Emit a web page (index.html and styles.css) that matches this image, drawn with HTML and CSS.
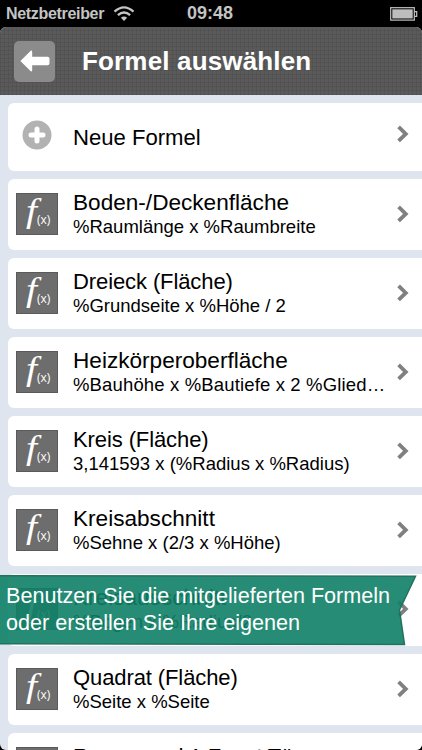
FILE: index.html
```html
<!DOCTYPE html>
<html lang="de">
<head>
  <meta charset="UTF-8" />
  <meta name="viewport" content="width=device-width, initial-scale=1.0" />
  <title>Formel auswählen</title>
  <link rel="stylesheet" href="styles.css">
</head>

<body>
  <svg class="defs" width="0" height="0">
    <symbol id="chevron" viewBox="0 0 12 18">
      <path d="M1.6 1.9 L8.8 8.9 L1.6 15.9" fill="none" stroke="#808080" stroke-width="3.8" />
    </symbol>
  </svg>

  <div class="status-bar">
    <div class="carrier">
      <span class="carrier-name">Netzbetreiber</span>
      <svg class="wifi" width="22" height="16" viewBox="0 0 22 16">
        <path d="M1.5 5.6 Q11 -2.8 20.5 5.6" />
        <path d="M4.9 9.2 Q11 3.8 17.1 9.2" />
        <path class="dot" d="M11 15 L7.9 11.8 Q11 9.2 14.1 11.8 Z" />
      </svg>
    </div>
    <span class="clock">09:48</span>
    <svg class="battery" width="28" height="14" viewBox="0 0 28 14">
      <rect x="0.7" y="0.7" width="23.6" height="12.4" fill="none" stroke="#c4c4c4" stroke-width="1.2" />
      <rect x="2.3" y="2.3" width="20.4" height="9.2" fill="#bdbdbd" />
      <path d="M24.5 4.7 H26.7 V9.3 H24.5" fill="none" stroke="#c4c4c4" stroke-width="1.2" />
    </svg>
  </div>

  <div class="screen">
    <header class="header">
      <button class="back" type="button" aria-label="Zurück">
        <svg width="30" height="22" viewBox="0 0 30 22">
          <path d="M0.4 11 L11 0.6 Q12.2 0.4 12.2 2 V6.8 H27.5 Q29.5 6.8 29.5 8.8 V13.3 Q29.5 15.3 27.5 15.3 H12.2 V20 Q12.2 21.6 11 21.4 Z" fill="#fff" />
        </svg>
      </button>
      <h1>Formel auswählen</h1>
    </header>

    <ul class="list">
      <li class="row row-new">
        <svg class="plus" width="30" height="30" viewBox="0 0 30 30">
          <circle cx="15" cy="15" r="14.5" fill="#b2b2b2" />
          <path d="M15 9 V21 M9 15 H21" stroke="#fff" stroke-width="5" stroke-linecap="round" />
        </svg>
        <div class="text"><div class="name">Neue Formel</div></div>
        <svg class="chevron"><use href="#chevron" /></svg>
      </li>
      <li class="row">
        <div class="icon"><span class="f">f</span><span class="x">(x)</span></div>
        <div class="text"><div class="name">Boden-/Deckenfläche</div><div class="formula">%Raumlänge x %Raumbreite</div></div>
        <svg class="chevron"><use href="#chevron" /></svg>
      </li>
      <li class="row">
        <div class="icon"><span class="f">f</span><span class="x">(x)</span></div>
        <div class="text"><div class="name name-tight">Dreieck (Fläche)</div><div class="formula">%Grundseite x %Höhe / 2</div></div>
        <svg class="chevron"><use href="#chevron" /></svg>
      </li>
      <li class="row">
        <div class="icon"><span class="f">f</span><span class="x">(x)</span></div>
        <div class="text"><div class="name">Heizkörperoberfläche</div><div class="formula formula-long">%Bauhöhe x %Bautiefe x 2 %Glied…</div></div>
        <svg class="chevron"><use href="#chevron" /></svg>
      </li>
      <li class="row">
        <div class="icon"><span class="f">f</span><span class="x">(x)</span></div>
        <div class="text"><div class="name name-tight">Kreis (Fläche)</div><div class="formula">3,141593 x (%Radius x %Radius)</div></div>
        <svg class="chevron"><use href="#chevron" /></svg>
      </li>
      <li class="row">
        <div class="icon"><span class="f">f</span><span class="x">(x)</span></div>
        <div class="text"><div class="name">Kreisabschnitt</div><div class="formula">%Sehne x (2/3 x %Höhe)</div></div>
        <svg class="chevron"><use href="#chevron" /></svg>
      </li>
      <li class="row">
        <div class="icon"><span class="f">f</span><span class="x">(x)</span></div>
        <div class="text"><div class="name">Kreisausschnitt</div><div class="formula">%Bogen x %Radius/2</div></div>
        <svg class="chevron"><use href="#chevron" /></svg>
      </li>
      <li class="row">
        <div class="icon"><span class="f">f</span><span class="x">(x)</span></div>
        <div class="text"><div class="name name-tight">Quadrat (Fläche)</div><div class="formula">%Seite x %Seite</div></div>
        <svg class="chevron"><use href="#chevron" /></svg>
      </li>
      <li class="row">
        <div class="icon"></div>
        <div class="text"><div class="name name-tight">Raumwand 1 Fenst Tür</div></div>
      </li>
    </ul>
  </div>

  <div class="banner">
    <svg class="ribbon" width="418" height="71" viewBox="0 0 418 71">
      <path d="M-2 0.8 L415.5 1.3 L399.5 35 L404.5 69.5 L-2 68.8 Z" />
    </svg>
    <p>Benutzen Sie die mitgelieferten Formeln<br>oder erstellen Sie Ihre eigenen</p>
  </div>
</body>
</html>
```

FILE: styles.css
```css
* {
  box-sizing: border-box;
}

body {
  margin: 0;
  width: 422px;
  height: 750px;
  overflow: hidden;
  position: relative;
  background: #000;
  font-family: "Liberation Sans", Arial, sans-serif;
  color: #000;
}

.defs {
  position: absolute;
}

.status-bar {
  display: grid;
  grid-template-columns: 1fr auto 1fr;
  align-items: center;
  height: 27px;
  padding: 0 4px 0 6px;
  color: #c4c4c4;
}

.carrier {
  display: flex;
  align-items: center;
  gap: 9px;
}

.carrier-name {
  font-size: 16px;
  font-weight: bold;
  letter-spacing: -0.32px;
}

.wifi path {
  fill: none;
  stroke: #c4c4c4;
  stroke-width: 2.3;
}

.wifi .dot {
  fill: #c4c4c4;
  stroke: none;
}

.clock {
  margin-right: 4px;
  font-size: 18px;
  font-weight: bold;
}

.battery {
  justify-self: end;
}

.screen {
  height: 723px;
  overflow: hidden;
  border-radius: 6px;
  background: #dfe5ee;
}

.header {
  display: flex;
  align-items: center;
  gap: 27px;
  height: 68px;
  padding-left: 14px;
  background-color: #5a5a5a;
  background-image:
    repeating-linear-gradient(0deg, rgba(0, 0, 0, 0.07) 0 1px, transparent 1px 4px),
    repeating-linear-gradient(90deg, rgba(0, 0, 0, 0.07) 0 1px, transparent 1px 4px);
}

.back {
  display: flex;
  align-items: center;
  justify-content: center;
  width: 41px;
  height: 41px;
  padding: 0;
  border: none;
  border-radius: 5px;
  background: #8b8b8b;
}

h1 {
  margin: 0;
  font-size: 26px;
  line-height: 30px;
  letter-spacing: 0.16px;
  color: #fff;
}

.list {
  display: flex;
  flex-direction: column;
  gap: 8px;
  margin: 0;
  padding: 8px 0 0 8px;
  list-style: none;
}

.row {
  display: flex;
  align-items: flex-start;
  flex-shrink: 0;
  height: 71.15px;
  padding: 14px 13px 0 8px;
  border-radius: 6px 0 0 6px;
  background: #fff;
}

.row-new {
  height: 67.7px;
}

.icon {
  display: flex;
  flex-shrink: 0;
  width: 42px;
  height: 42px;
  padding-left: 10px;
  border: 1px solid #5a5a5a;
  background: #6d6d6d;
  color: #fff;
}

.f {
  width: 10px;
  font-family: "Liberation Serif", serif;
  font-style: italic;
  font-size: 33px;
  line-height: 35px;
  transform: scaleX(1.2);
}

.x {
  padding-top: 17px;
  font-family: "Open Sans", sans-serif;
  font-size: 12px;
  line-height: 18px;
}

.plus {
  flex-shrink: 0;
  margin: 3px 6px 0;
}

.text {
  flex: 1;
  margin: -3px 0 0 15px;
  white-space: nowrap;
}

.name {
  font-size: 22.6px;
  line-height: 25px;
}

.name-tight {
  font-size: 22px;
  letter-spacing: -0.1px;
}

.row-new .text {
  margin-top: 8px;
}

.row-new .name {
  font-size: 22.1px;
}

.formula {
  font-size: 18.5px;
  line-height: 24px;
}

.formula-long {
  letter-spacing: 0.15px;
}

.chevron {
  flex-shrink: 0;
  width: 12px;
  height: 18px;
  margin-top: 12px;
}

.row-new .chevron {
  margin-top: 8px;
}

/* hint ribbon lying over the list */
.banner {
  position: absolute;
  left: 0;
  top: 575px;
  width: 418px;
  height: 71px;
}

.ribbon {
  position: absolute;
  inset: 0;
}

.ribbon path {
  fill: rgba(14, 128, 102, 0.9);
  stroke: #237260;
  stroke-width: 1.5;
}

.banner p {
  position: relative;
  margin: 0;
  padding: 7px 0 0 6px;
  font-size: 21.6px;
  line-height: 27px;
  color: #fff;
  white-space: nowrap;
}
```
